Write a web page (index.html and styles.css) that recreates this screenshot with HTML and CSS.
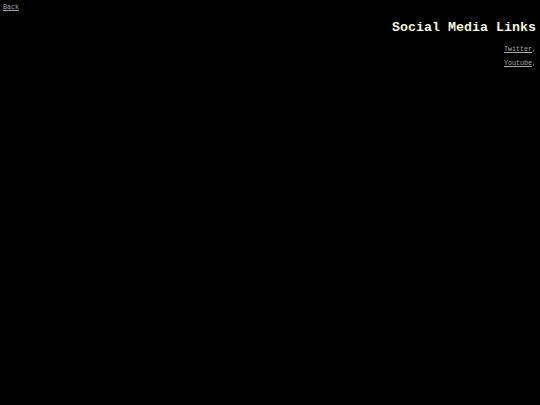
FILE: index.html
```html
<!DOCTYPE html>
<html>
<head>
<meta charset="utf-8">
<link rel="stylesheet" href="styles.css">
</head>
<body>
<a class="back" href="#">Back</a>
<div class="content">
  <h1 class="title">Social Media Links</h1>
  <p class="item"><a href="#">Twitter</a>,</p>
  <p class="item"><a href="#">Youtube</a>,</p>
</div>
</body>
</html>
```

FILE: styles.css
```css
html, body {
  background: #000;
}
body {
  margin: 0;
  padding: 3px 4px 4px 3px;
  font-family: "Nimbus Mono PS", "Courier", "Liberation Mono", monospace;
  font-size: 6.67px;
  color: #aaa;
}
a {
  color: #aaa;
  text-decoration: underline;
}
.back {
  display: inline-block;
  line-height: 8px;
}
.content {
  text-align: right;
}
.title {
  margin: 9px 0 9px 0;
  font-size: 13.33px;
  font-weight: bold;
  color: #f5f5dc;
  line-height: 16px;
}
.item {
  margin: 0 0 6px 0;
  line-height: 8px;
}
```
